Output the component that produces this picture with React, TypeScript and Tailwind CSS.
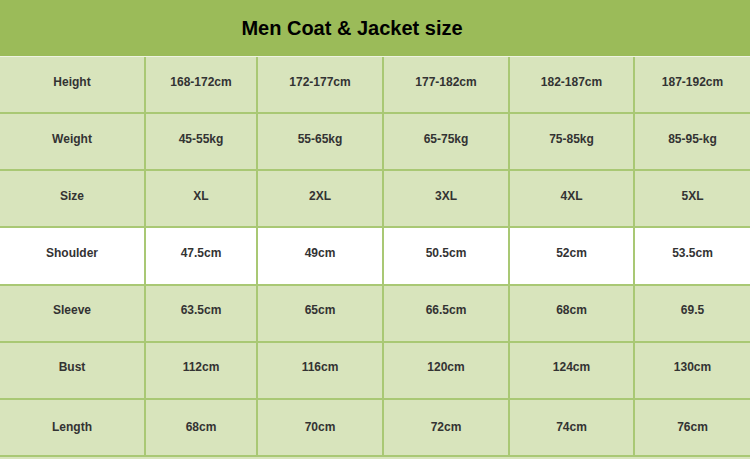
const rows: { label: string; values: string[]; white?: boolean }[] = [
  { label: "Height", values: ["168-172cm", "172-177cm", "177-182cm", "182-187cm", "187-192cm"] },
  { label: "Weight", values: ["45-55kg", "55-65kg", "65-75kg", "75-85kg", "85-95-kg"] },
  { label: "Size", values: ["XL", "2XL", "3XL", "4XL", "5XL"] },
  { label: "Shoulder", values: ["47.5cm", "49cm", "50.5cm", "52cm", "53.5cm"], white: true },
  { label: "Sleeve", values: ["63.5cm", "65cm", "66.5cm", "68cm", "69.5"] },
  { label: "Bust", values: ["112cm", "116cm", "120cm", "124cm", "130cm"] },
  { label: "Length", values: ["68cm", "70cm", "72cm", "74cm", "76cm"] },
]

export default function App() {
  return (
    <div className="h-[459px] w-[750px] overflow-hidden bg-[#d8e4bc] font-['Liberation_Sans',Arial,sans-serif]">
      <div className="flex h-[56px] items-center justify-center bg-[#9bbb59] pr-[46px]">
        <h1 className="text-[20px] font-bold text-black">Men Coat &amp; Jacket size</h1>
      </div>
      <div className="h-px bg-[#eef3e2]" />

      <div className="grid h-[400px] grid-cols-[144px_110px_124px_124px_123px_1fr] grid-rows-7 gap-[2px] bg-[#a9c874] pb-[2px]">
        {rows.map((row, i) => (
          <Row key={row.label} {...row} last={i === rows.length - 1} />
        ))}
      </div>
    </div>
  )
}

function Row({ label, values, white, last }: { label: string; values: string[]; white?: boolean; last?: boolean }) {
  const cell = `${white ? "bg-white" : "bg-[#d8e4bc]"} ${last ? "" : "pb-[6px]"} flex items-center justify-center text-[12px] font-bold text-[#333]`
  return (
    <>
      <div className={cell}>{label}</div>
      {values.map((v, i) => (
        <div key={i} className={cell}>
          {v}
        </div>
      ))}
    </>
  )
}
